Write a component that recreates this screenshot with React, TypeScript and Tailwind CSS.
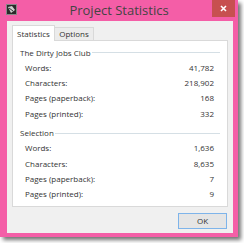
import React from 'react';

const font = { fontFamily: '"Segoe UI", "Open Sans", "Noto Sans", sans-serif' };

type Row = { label: string; value: string };

const club: Row[] = [
  { label: 'Words:', value: '41,782' },
  { label: 'Characters:', value: '218,902' },
  { label: 'Pages (paperback):', value: '168' },
  { label: 'Pages (printed):', value: '332' },
];

const selection: Row[] = [
  { label: 'Words:', value: '1,636' },
  { label: 'Characters:', value: '8,635' },
  { label: 'Pages (paperback):', value: '7' },
  { label: 'Pages (printed):', value: '9' },
];

function Group({ title, rows }: { title: string; rows: Row[] }) {
  return (
    <div className="flex flex-col">
      <div className="flex items-center gap-[1px] h-[15px] text-[8px] text-[#333]">
        <span className="whitespace-nowrap">{title}</span>
        <div className="flex-1 h-[1px] bg-[#d5dfe5]" />
      </div>
      <div className="flex flex-col pl-[5px] pr-[6px]">
        {rows.map((r) => (
          <div key={r.label} className="flex justify-between h-[15.4px] items-center text-[8px] text-[#333]">
            <span>{r.label}</span>
            <span>{r.value}</span>
          </div>
        ))}
      </div>
    </div>
  );
}

export default function App() {
  return (
    <div className="w-[244px] h-[243px] bg-white" style={font}>
      <div className="w-[238px] h-[237px] bg-[#f45ea7] flex flex-col shadow-[3px_3px_4px_rgba(0,0,0,0.55)]">
        {/* title bar */}
        <div className="h-[21px] flex items-start relative">
          <div className="w-[11px] h-[11px] mt-[4px] ml-[6px] bg-[#2a2a2a] border border-[#888] flex items-center justify-center">
            <svg width="9" height="9" viewBox="0 0 9 9">
              <path d="M1 2 L5 1 L8 5 L4 8 Z" fill="#cfcfcf" />
              <path d="M2 3 L6 6" stroke="#333" strokeWidth="1" />
            </svg>
          </div>
          <div className="absolute left-0 right-0 top-[2px] text-center text-[13px] leading-[17px] text-[#444]">
            Project Statistics
          </div>
          <div className="absolute right-[3px] top-0 w-[23px] h-[17px] bg-[#c75050] flex items-center justify-center">
            <svg width="7" height="7" viewBox="0 0 7 7">
              <path d="M1 1 L6 6 M6 1 L1 6" stroke="#fff" strokeWidth="1.6" />
            </svg>
          </div>
        </div>
        {/* client */}
        <div className="flex-1 ml-[7px] mr-[5px] mb-[4px] bg-[#f0f0f0] flex flex-col pt-[4px] px-[5px]">
          <div className="flex items-end h-[16px] relative z-10">
            <div className="h-[16px] w-[43px] bg-white border border-b-0 border-[#d9d9d9] flex items-center justify-center text-[8px] text-[#333]">
              Statistics
            </div>
            <div className="h-[14px] w-[39px] bg-[#ececec] border border-l-0 border-[#d9d9d9] flex items-center justify-center text-[8px] text-[#333]">
              Options
            </div>
          </div>
          <div className="h-[167px] -mt-[1px] bg-white border border-[#d9d9d9] pt-[4px] pl-[7px] pr-[7px] flex flex-col gap-[4px]">
            <Group title="The Dirty Jobs Club" rows={club} />
            <Group title="Selection" rows={selection} />
          </div>
          <div className="flex justify-end mt-[6px] pr-[1px]">
            <div className="w-[49px] h-[16px] border border-[#7eb4ea] bg-[#e5e5e5] flex items-center justify-center text-[8px] text-[#333]">
              OK
            </div>
          </div>
        </div>
      </div>
    </div>
  );
}
